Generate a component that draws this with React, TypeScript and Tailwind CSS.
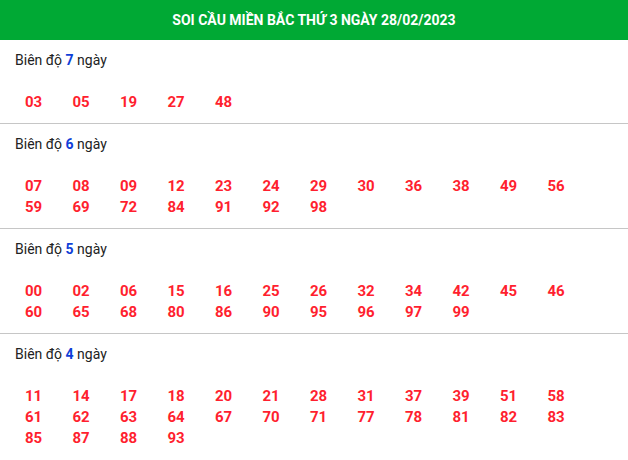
import React from "react";

const sections = [
  { days: 7, numbers: ["03", "05", "19", "27", "48"] },
  {
    days: 6,
    numbers: ["07", "08", "09", "12", "23", "24", "29", "30", "36", "38", "49", "56", "59", "69", "72", "84", "91", "92", "98"],
  },
  {
    days: 5,
    numbers: ["00", "02", "06", "15", "16", "25", "26", "32", "34", "42", "45", "46", "60", "65", "68", "80", "86", "90", "95", "96", "97", "99"],
  },
  {
    days: 4,
    numbers: [
      "11", "14", "17", "18", "20", "21", "28", "31", "37", "39", "51", "58",
      "61", "62", "63", "64", "67", "70", "71", "77", "78", "81", "82", "83",
      "85", "87", "88", "93",
    ],
  },
];

const App = () => {
  return (
    <div className="w-[628px] bg-white font-['Roboto',_'Liberation_Sans',_sans-serif]">
      <div className="h-10 bg-[#00a934] flex items-center justify-center">
        <h2 className="text-white font-bold text-[14px] leading-5">
          SOI CẦU MIỀN BẮC THỨ 3 NGÀY 28/02/2023
        </h2>
      </div>
      {sections.map((s, i) => (
        <div
          key={s.days}
          className={
            i < sections.length - 1
              ? "pt-[10px] pb-[10px] border-b border-[#c6c6c6]"
              : "pt-[10px] pb-[10px]"
          }
        >
          <div className="pl-[15px] text-[14px] leading-5 text-[#222]">
            Biên độ <span className="font-bold text-[#0f3fd8]">{s.days}</span> ngày
          </div>
          <div className="mt-[22px] pl-[25px] grid grid-cols-[repeat(12,47.5px)]">
            {s.numbers.map((n) => (
              <span key={n} className="text-[15px] leading-[21px] font-bold text-[#ff1f2f]">
                {n}
              </span>
            ))}
          </div>
        </div>
      ))}
    </div>
  );
};

export default App;
